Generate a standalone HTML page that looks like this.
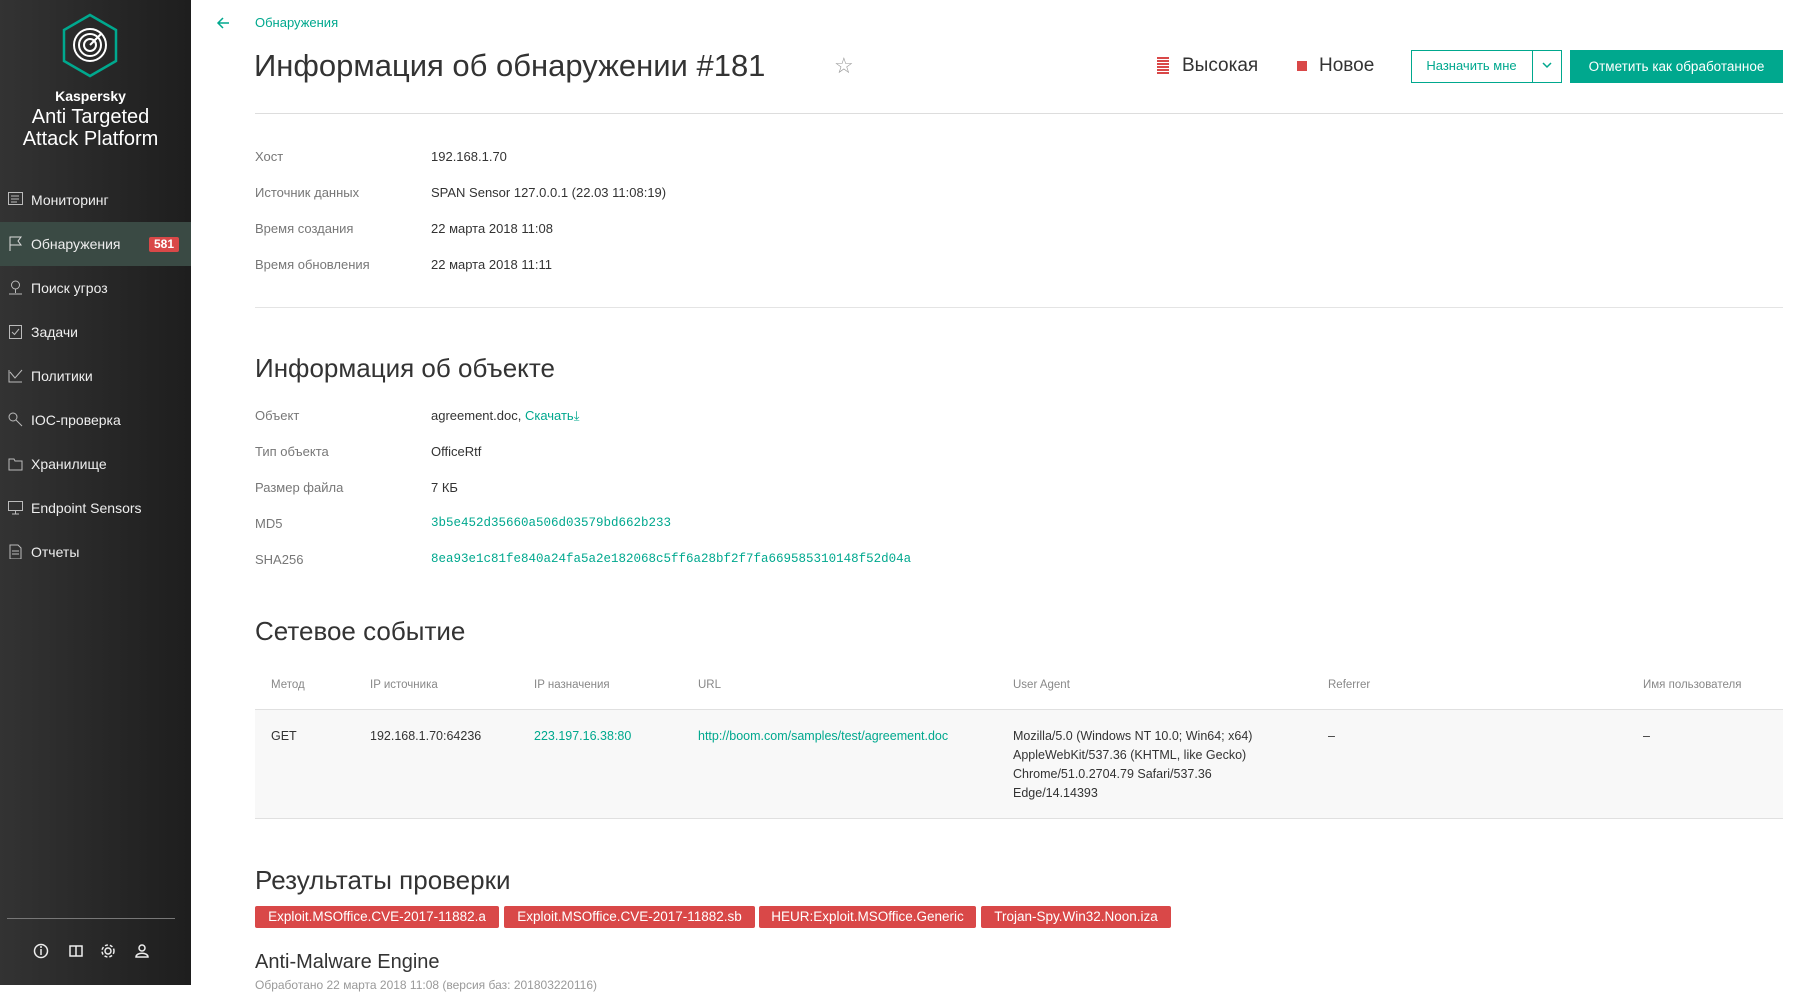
<!DOCTYPE html>
<html><head><meta charset="utf-8"><style>
*{margin:0;padding:0;box-sizing:border-box}
body{width:1811px;height:985px;overflow:hidden;background:#fff;font-family:"Liberation Sans",sans-serif;color:#333;position:relative}
.a{position:absolute;white-space:nowrap}
#sb{position:absolute;left:0;top:0;width:191px;height:985px;background:linear-gradient(90deg,#333 0%,#262626 60%,#1e1e1e 100%)}
.nav{position:absolute;left:0;width:191px;height:44px;color:#eee;font-size:14px;line-height:44px;padding-left:31px}
.nav svg{position:absolute;left:8px;top:14px}
.lbl{font-size:13px;color:#777}
.val{font-size:13px;color:#333}
.h2{font-size:26px;color:#333}
.th{font-size:11.5px;color:#888}
.td{font-size:12.5px;color:#333;line-height:19px}
.lnk{color:#00a88e}
.tag{position:absolute;top:906px;height:22px;background:#d94848;color:#fff;font-size:13.5px;line-height:22px;text-align:center;border-radius:2px}
</style></head><body>
<div id="sb">
<svg class="a" style="left:62px;top:13px" width="56" height="65" viewBox="0 0 56 65"><polygon points="28,2 54,17 54,48 28,63 2,48 2,17" fill="none" stroke="#00a88e" stroke-width="2.5"/><circle cx="28" cy="32" r="16" fill="none" stroke="#fff" stroke-width="2"/><circle cx="28" cy="32" r="11" fill="none" stroke="#fff" stroke-width="2"/><circle cx="28" cy="32" r="6" fill="none" stroke="#fff" stroke-width="2"/><line x1="28" y1="32" x2="40" y2="20" stroke="#fff" stroke-width="2"/></svg>
<div class="a" style="left:0;width:181px;text-align:center;top:88px;color:#fff;font-size:14px;font-weight:bold">Kaspersky</div>
<div class="a" style="left:0;width:181px;text-align:center;top:106px;color:#fff;font-size:20px;line-height:22px">Anti Targeted<br>Attack Platform</div>
<div class="nav" style="top:178px"><svg width="15" height="13"><rect x=".5" y=".5" width="14" height="12" fill="none" stroke="#bbb"/><path d="M3 4h8M3 7h8M3 10h6" stroke="#bbb"/></svg>Мониторинг</div>
<div class="nav" style="top:222px;background:#3a4a44"><svg width="15" height="15"><path d="M2 15V1h11l-3 4 3 4H2" fill="none" stroke="#ddd"/></svg>Обнаружения<span class="a" style="left:149px;top:15px;width:30px;height:15px;background:#d94848;border-radius:2px;color:#fff;font-size:12px;line-height:15px;text-align:center;font-weight:bold">581</span></div>
<div class="nav" style="top:266px"><svg width="15" height="15"><circle cx="7.5" cy="5" r="4" fill="none" stroke="#bbb"/><path d="M7.5 9v4M1 14h13" stroke="#bbb"/></svg>Поиск угроз</div>
<div class="nav" style="top:310px"><svg width="15" height="15"><rect x="1.5" y="1.5" width="12" height="13" fill="none" stroke="#bbb"/><path d="M4 8l2.5 2.5L11 5" fill="none" stroke="#bbb"/></svg>Задачи</div>
<div class="nav" style="top:354px"><svg width="15" height="15"><path d="M1 2v12h13M2 4l5 6 7-8" fill="none" stroke="#bbb"/></svg>Политики</div>
<div class="nav" style="top:398px"><svg width="15" height="15"><circle cx="5" cy="5" r="4" fill="none" stroke="#bbb"/><path d="M8 8l6 6" stroke="#bbb"/></svg>IOC-проверка</div>
<div class="nav" style="top:442px"><svg width="15" height="15"><path d="M1 3h5l1 2h7v9H1z" fill="none" stroke="#bbb"/></svg>Хранилище</div>
<div class="nav" style="top:486px"><svg width="15" height="15"><rect x=".5" y="1.5" width="14" height="9" fill="none" stroke="#bbb"/><path d="M7.5 11v3M4 14h7" stroke="#bbb"/></svg>Endpoint Sensors</div>
<div class="nav" style="top:530px"><svg width="15" height="15"><path d="M2 1h8l3 3v11H2z" fill="none" stroke="#bbb"/><path d="M4 7h7M4 10h7" stroke="#bbb"/></svg>Отчеты</div>
<div class="a" style="left:7px;top:918px;width:168px;height:1px;background:#777"></div>
<svg class="a" style="left:33px;top:943px" width="120" height="16"><g fill="none" stroke="#eee" stroke-width="1.5"><circle cx="8" cy="8" r="6.5"/><path d="M8 6v6"/><path d="M37 3h6v10h-6zM43 3h6v10h-6z"/><circle cx="75" cy="8" r="3"/><circle cx="75" cy="8" r="6" stroke-dasharray="3 2"/><circle cx="109" cy="5" r="3"/><path d="M103 14c0-5 12-5 12 0z"/></g><circle cx="8" cy="4" r="1" fill="#eee"/></svg>
</div>

<svg class="a" style="left:216px;top:17px" width="14" height="12"><path d="M13 6H2M7 1L2 6l5 5" fill="none" stroke="#00a88e" stroke-width="1.5"/></svg>
<div class="a lnk" style="left:255px;top:15px;font-size:13px">Обнаружения</div>
<div class="a" style="left:254px;top:48px;font-size:31px;color:#333;font-weight:300">Информация об обнаружении #181</div>
<div class="a" style="left:834px;top:53px;font-size:22px;color:#999">☆</div>
<svg class="a" style="left:1157px;top:57px" width="12" height="17"><g fill="#d94848"><rect y="0" width="12" height="2"/><rect y="3" width="12" height="2"/><rect y="6" width="12" height="2"/><rect y="9" width="12" height="2"/><rect y="12" width="12" height="2"/><rect y="15" width="12" height="2"/></g></svg>
<div class="a" style="left:1182px;top:55px;font-size:19px;color:#333">Высокая</div>
<div class="a" style="left:1297px;top:61px;width:10px;height:10px;background:#d94848"></div>
<div class="a" style="left:1319px;top:55px;font-size:19px;color:#333">Новое</div>
<div class="a" style="left:1411px;top:50px;width:151px;height:33px;border:1px solid #00a88e"></div>
<div class="a" style="left:1532px;top:50px;width:1px;height:33px;background:#00a88e"></div>
<div class="a lnk" style="left:1411px;width:121px;text-align:center;top:58px;font-size:13px">Назначить мне</div>
<svg class="a" style="left:1542px;top:62px" width="10" height="7"><path d="M1 1l4 4 4-4" fill="none" stroke="#00a88e" stroke-width="1.5"/></svg>
<div class="a" style="left:1570px;top:50px;width:213px;height:33px;background:#00a88e;color:#fff;font-size:13.5px;line-height:33px;text-align:center">Отметить как обработанное</div>
<div class="a" style="left:255px;top:113px;width:1528px;height:1px;background:#ddd"></div>

<div class="a lbl" style="left:255px;top:149px">Хост</div><div class="a val" style="left:431px;top:149px">192.168.1.70</div>
<div class="a lbl" style="left:255px;top:185px">Источник данных</div><div class="a val" style="left:431px;top:185px">SPAN Sensor 127.0.0.1 (22.03 11:08:19)</div>
<div class="a lbl" style="left:255px;top:221px">Время создания</div><div class="a val" style="left:431px;top:221px">22 марта 2018 11:08</div>
<div class="a lbl" style="left:255px;top:257px">Время обновления</div><div class="a val" style="left:431px;top:257px">22 марта 2018 11:11</div>
<div class="a" style="left:255px;top:307px;width:1528px;height:1px;background:#e4e4e4"></div>

<div class="a h2" style="left:255px;top:353px">Информация об объекте</div>
<div class="a lbl" style="left:255px;top:408px">Объект</div><div class="a val" style="left:431px;top:408px">agreement.doc, <span class="lnk">Скачать⤓</span></div>
<div class="a lbl" style="left:255px;top:444px">Тип объекта</div><div class="a val" style="left:431px;top:444px">OfficeRtf</div>
<div class="a lbl" style="left:255px;top:480px">Размер файла</div><div class="a val" style="left:431px;top:480px">7 КБ</div>
<div class="a lbl" style="left:255px;top:516px">MD5</div><div class="a val lnk" style="left:431px;top:516px;font-family:'Liberation Mono',monospace;font-size:12.5px">3b5e452d35660a506d03579bd662b233</div>
<div class="a lbl" style="left:255px;top:552px">SHA256</div><div class="a val lnk" style="left:431px;top:552px;font-family:'Liberation Mono',monospace;font-size:12.5px">8ea93e1c81fe840a24fa5a2e182068c5ff6a28bf2f7fa669585310148f52d04a</div>

<div class="a h2" style="left:255px;top:616px">Сетевое событие</div>
<div class="a th" style="left:271px;top:679px">Метод</div>
<div class="a th" style="left:370px;top:679px">IP источника</div>
<div class="a th" style="left:534px;top:679px">IP назначения</div>
<div class="a th" style="left:698px;top:679px">URL</div>
<div class="a th" style="left:1013px;top:679px">User Agent</div>
<div class="a th" style="left:1328px;top:679px">Referrer</div>
<div class="a th" style="left:1643px;top:679px">Имя пользователя</div>
<div class="a" style="left:255px;top:709px;width:1528px;height:110px;background:#f8f8f8;border-top:1px solid #e0e0e0;border-bottom:1px solid #e0e0e0"></div>
<div class="a td" style="left:271px;top:727px">GET</div>
<div class="a td" style="left:370px;top:727px">192.168.1.70:64236</div>
<div class="a td lnk" style="left:534px;top:727px">223.197.16.38:80</div>
<div class="a td lnk" style="left:698px;top:727px">http://boom.com/samples/test/agreement.doc</div>
<div class="a td" style="left:1013px;top:727px">Mozilla/5.0 (Windows NT 10.0; Win64; x64)<br>AppleWebKit/537.36 (KHTML, like Gecko)<br>Chrome/51.0.2704.79 Safari/537.36<br>Edge/14.14393</div>
<div class="a td" style="left:1328px;top:727px">–</div>
<div class="a td" style="left:1643px;top:727px">–</div>

<div class="a h2" style="left:255px;top:865px">Результаты проверки</div>
<div class="tag" style="left:255px;width:244px">Exploit.MSOffice.CVE-2017-11882.a</div>
<div class="tag" style="left:504px;width:251px">Exploit.MSOffice.CVE-2017-11882.sb</div>
<div class="tag" style="left:759px;width:217px">HEUR:Exploit.MSOffice.Generic</div>
<div class="tag" style="left:981px;width:190px">Trojan-Spy.Win32.Noon.iza</div>
<div class="a" style="left:255px;top:951px;font-size:20px;color:#333">Anti-Malware Engine</div>
<div class="a" style="left:255px;top:978px;font-size:12px;color:#999">Обработано 22 марта 2018 11:08 (версия баз: 201803220116)</div>
</body></html>
